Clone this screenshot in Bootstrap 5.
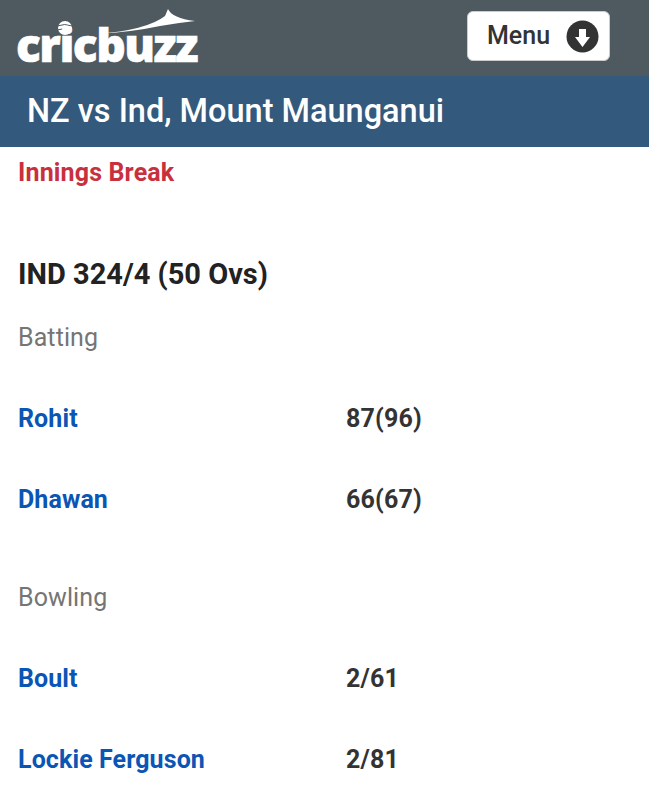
<!DOCTYPE html>
<html>
<head>
  <meta charset="utf-8">
  <meta name="viewport" content="width=device-width, initial-scale=1">
  <title>Cricbuzz - NZ vs Ind</title>
  <link href="https://cdn.jsdelivr.net/npm/bootstrap@5.3.0/dist/css/bootstrap.min.css" rel="stylesheet">
  <style>
    body { font-family: Roboto, "Liberation Sans", sans-serif; color: #222; overflow: hidden; }
    .top-bar { height: 76px; background: #4f5a60; padding: 0 39px 4px 17px; }
    .logo-box { position: relative; width: 182px; height: 56px; }
    .logo-text { position: absolute; left: -1px; bottom: -3px; font-family: "Open Sans", sans-serif; font-weight: 800; font-size: 46px; letter-spacing: -1.5px; line-height: 1; color: #fff; -webkit-text-stroke: 0.6px #fff; }
    .logo-art { position: absolute; left: 0; top: 0; }
    .menu-btn { width: 143px; height: 50px; background: #fff; border: 1px solid #ccc; border-radius: 6px; font-size: 25px; font-weight: 500; color: #333; padding: 0 10px 0 19px; }
    .title-bar { height: 71px; background: #335a7c; color: #fff; font-size: 32.5px; font-weight: 500; padding-left: 27px; line-height: 71px; }
    .status-text { color: #c9303e; font-size: 25px; font-weight: 700; line-height: 30px; margin-top: 11px; letter-spacing: .15px; }
    .score-text { font-size: 29px; font-weight: 700; line-height: 32px; margin-top: 70px; }
    .group-label { color: #757575; font-size: 25px; line-height: 30px; margin-bottom: 25px; letter-spacing: .1px; }
    .batting-label { margin-top: 33px; }
    .bowling-label { margin-top: 43px; }
    .player-row { height: 81px; font-size: 25px; font-weight: 700; letter-spacing: .1px; }
    .player-name { width: 328px; color: #0b55b5; }
    .player-fig { color: #333; letter-spacing: .2px; }
    .content-box { padding-left: 18px; }
  </style>
</head>
<body>
  <div class="top-bar d-flex justify-content-between align-items-center">
    <div class="logo-box">
      <svg class="logo-art" width="182" height="56" viewBox="0 0 182 56">
        <circle cx="48" cy="20" r="7" fill="#fff"/>
        <path d="M40 18 Q48 15 55 18 M40 22 Q48 19 56 22" stroke="#4f5a60" stroke-width="1" fill="none"/>
        <path d="M80 26 Q130 22 148 8 L151 1 Q155 10 178 13 Q160 15 143 18 Q115 24 80 26Z" fill="#fff"/>
      </svg>
      <div class="logo-text">cricbuzz</div>
    </div>
    <button class="menu-btn d-flex align-items-center justify-content-between" type="button">
      <span>Menu</span>
      <svg width="33" height="33" viewBox="0 0 33 33">
        <circle cx="16.5" cy="16.5" r="16" fill="#333"/>
        <path d="M13 9h7v8h4l-7.500 10L9 17h4z" fill="#fff"/>
      </svg>
    </button>
  </div>
  <div class="title-bar">NZ vs Ind, Mount Maunganui</div>
  <div class="content-box">
    <div class="status-text">Innings Break</div>
    <div class="score-text">IND 324/4 (50 Ovs)</div>
    <div class="group-label batting-label">Batting</div>
    <div class="player-row d-flex align-items-center"><span class="player-name">Rohit</span><span class="player-fig">87(96)</span></div>
    <div class="player-row d-flex align-items-center"><span class="player-name">Dhawan</span><span class="player-fig">66(67)</span></div>
    <div class="group-label bowling-label">Bowling</div>
    <div class="player-row d-flex align-items-center"><span class="player-name">Boult</span><span class="player-fig">2/61</span></div>
    <div class="player-row d-flex align-items-center"><span class="player-name">Lockie Ferguson</span><span class="player-fig">2/81</span></div>
  </div>
  <script src="https://cdn.jsdelivr.net/npm/bootstrap@5.3.0/dist/js/bootstrap.bundle.min.js"></script>
</body>
</html>
